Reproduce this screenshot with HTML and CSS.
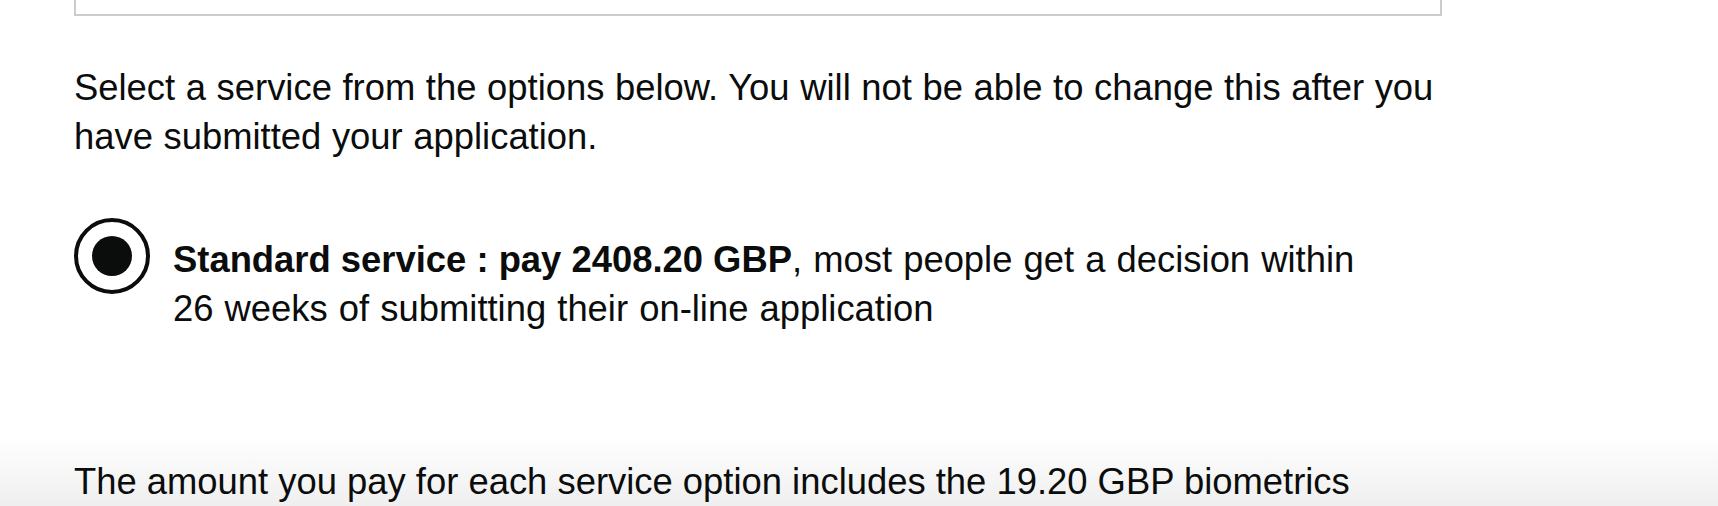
FILE: index.html
```html
<!DOCTYPE html>
<html lang="en">
<head>
<meta charset="utf-8">
<title>Select a service</title>
<link rel="stylesheet" href="styles.css">
</head>
<body>
<main class="page">
  <div class="panel"></div>
  <p class="body-text lead">Select a service from the options below. You will not be able to change this after you have submitted your application.</p>
  <div class="radios">
    <div class="radio-item">
      <span class="radio-mark checked" aria-hidden="true"></span>
      <label class="radio-label"><strong>Standard service : pay 2408.20 GBP</strong>, most people get a decision within 26 weeks of submitting their on-line application</label>
    </div>
  </div>
  <p class="body-text note">The amount you pay for each service option includes the 19.20 GBP biometrics</p>
</main>
</body>
</html>
```
FILE: styles.css
```css
html {
  background: #ffffff;
}
body {
  margin: 0;
  height: 506px;
  overflow: hidden;
  background: linear-gradient(to bottom, #ffffff 0, #ffffff 436px, #efefef 506px);
  color: #0b0c0c;
  font-family: "Liberation Sans", Arial, sans-serif;
  font-size: 36.4px;
  line-height: 48.5px;
}
.page {
  padding-left: 74px;
  width: 1368px;
}
.panel {
  margin-top: -40px;
  height: 52px;
  border: 2px solid #cccccc;
}
.body-text {
  margin: 0;
}
.lead {
  margin-top: 48px;
  word-spacing: 0.5px;
}
.radios {
  margin-top: 57px;
}
.radio-item {
  display: flex;
  align-items: flex-start;
  min-height: 76px;
}
.radio-mark {
  flex-shrink: 0;
  width: 76px;
  height: 76px;
  box-sizing: border-box;
  border: 4px solid #0b0c0c;
  border-radius: 50%;
  display: flex;
  align-items: center;
  justify-content: center;
}
.radio-mark.checked::after {
  content: "";
  width: 40px;
  height: 40px;
  border-radius: 50%;
  background: #0b0c0c;
}
.radio-label {
  margin-left: 23px;
  padding-top: 18px;
  max-width: 1200px;
  word-spacing: 1px;
}
.radio-label strong {
  font-weight: 700;
  word-spacing: 0;
}
.note {
  margin-top: 125px;
}
```
